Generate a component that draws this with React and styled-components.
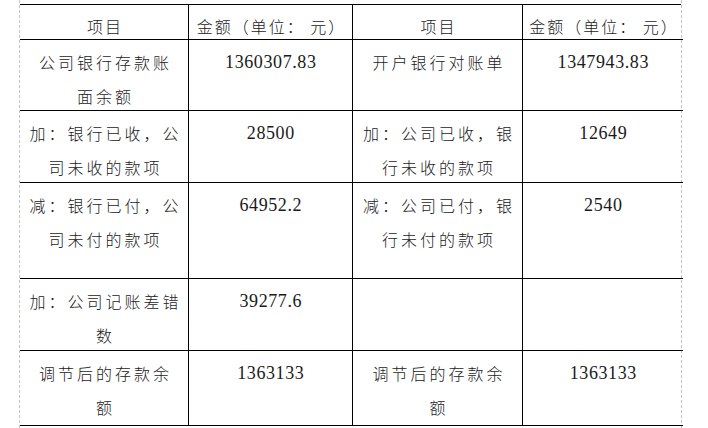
import styled, { createGlobalStyle } from 'styled-components'

const Global = createGlobalStyle`
  html, body {
    margin: 0;
    padding: 0;
    background: #fff;
  }
`
const Page = styled.div`
  width: 708px;
  height: 428px;
  overflow: hidden;
  background: #fff;
`
const Sheet = styled.div`
  margin-left: 19px;
  width: 663px;
  height: 428px;
  padding-top: 4px;
  box-sizing: border-box;
  border-left: 1px dashed #c4c4c4;
  border-right: 1px dashed #c4c4c4;
`
const Grid = styled.div`
  display: grid;
  grid-template-columns: 168px 164px 170px 161px;
  grid-template-rows: 35px 71px 72px 96px 72px 75px;
  border-top: 1px solid #000;
  color: #1a1a1a;
`
const Cell = styled.div`
  box-sizing: border-box;
  border-bottom: 1px solid #000;
  border-left: ${p => (p.$first ? 'none' : '1px solid #000')};
  padding-top: ${p => (p.$head ? '4px' : '5px')};
  text-align: center;
  white-space: nowrap;
  font-family: ${p =>
    p.$num
      ? '"Liberation Serif", "Noto Sans CJK SC", serif'
      : '"Noto Sans CJK SC", "Noto Sans CJK TC", sans-serif'};
  font-size: ${p => (p.$num ? '18px' : '16px')};
  line-height: 34px;
  font-weight: 300;
`
const Line = styled.div`
  letter-spacing: ${p => p.$ls}px;
  margin-right: -${p => p.$ls}px;
`

const rows = [
  { cells: [['项目'], ['金额（单位： 元）'], ['项目'], ['金额（单位： 元）']], head: true },
  { cells: [['公司银行存款账', '面余额'], ['1360307.83'], ['开户银行对账单'], ['1347943.83']] },
  { cells: [['加：银行已收，公', '司未收的款项'], ['28500'], ['加：公司已收，银', '行未收的款项'], ['12649']] },
  { cells: [['减：银行已付，公', '司未付的款项'], ['64952.2'], ['减：公司已付，银', '行未付的款项'], ['2540']] },
  { cells: [['加：公司记账差错', '数'], ['39277.6'], [], []] },
  { cells: [['调节后的存款余', '额'], ['1363133'], ['调节后的存款余', '额'], ['1363133']] },
]

function spacing(head, num) {
  if (num) return 0.6
  return head ? 2 : 3
}

export default function App() {
  return (
    <Page>
      <Global />
      <Sheet>
        <Grid>
          {rows.map((r, i) =>
            r.cells.map((lines, j) => {
              const num = !r.head && j % 2 === 1
              return (
                <Cell key={i + '-' + j} $num={num} $head={r.head} $first={j === 0}>
                  {lines.map((t, k) => (
                    <Line key={k} $ls={spacing(r.head, num)}>{t}</Line>
                  ))}
                </Cell>
              )
            })
          )}
        </Grid>
      </Sheet>
    </Page>
  )
}
